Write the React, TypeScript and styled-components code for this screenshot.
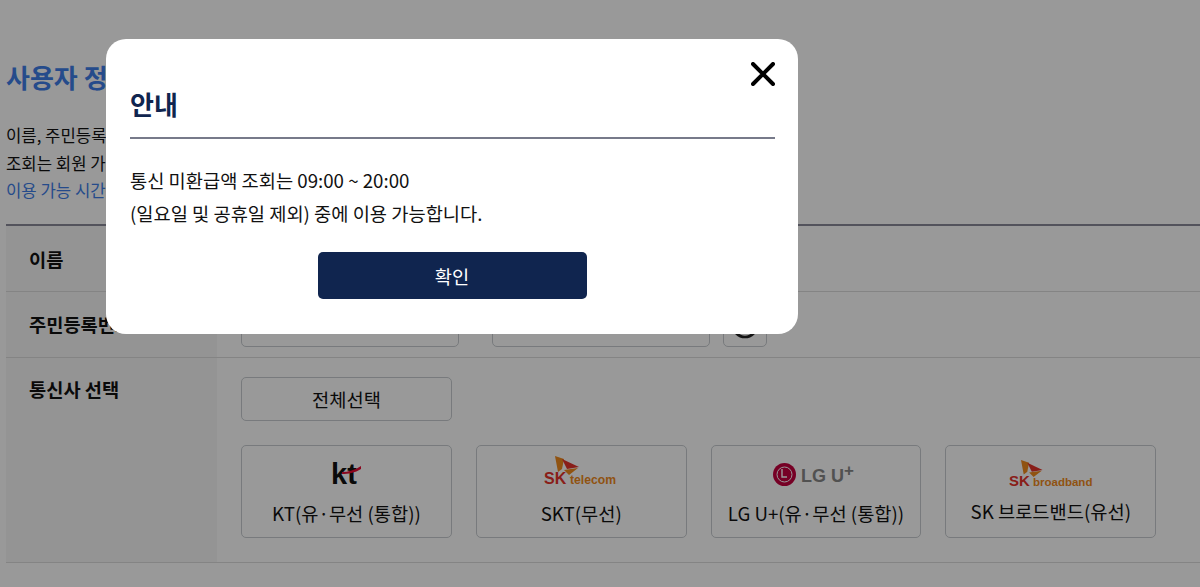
import React from "react";
import styled, { createGlobalStyle } from "styled-components";

const GlobalStyle = createGlobalStyle`
  * {
    box-sizing: border-box;
  }
  html, body {
    margin: 0;
    height: 100%;
    overflow: hidden;
    background: #fff;
    font-family: "Noto Sans CJK KR", "Noto Sans", sans-serif;
    color: #111;
  }
`;

const SkWing = ({ x, y, s }: { x: number; y: number; s: number }) => (
  <g transform={`translate(${x} ${y}) scale(${s})`}>
    <path d="M0 0 L9 3 L7 13 L3 16 Z" fill="#f08a1d" />
    <path d="M7 3 L24 11 L12 13 Z" fill="#e5332a" />
    <path d="M9 14 L23 12 L14 19 Z" fill="#f08a1d" />
  </g>
);

const KtLogo = () => (
  <svg width="32" height="38" viewBox="0 -6 32 38">
    <text x="1" y="23" fontFamily="Liberation Sans" fontWeight="700" fontSize="29" fill="#111">kt</text>
    <path d="M12 11 C18 11 25 9 31 5 L31 8 C25 12 18 13 12 13 Z" fill="#e60a32" />
  </svg>
);

const SktLogo = () => (
  <svg width="76" height="32" viewBox="0 0 76 32">
    <SkWing x={12} y={0} s={1} />
    <text x="1" y="28" fontFamily="Liberation Sans" fontWeight="700" fontSize="16" fill="#e5332a">SK</text>
    <text x="27" y="28" fontFamily="Liberation Sans" fontWeight="700" fontSize="12.2" fill="#f08a1d">telecom</text>
  </svg>
);

const LguLogo = () => (
  <svg width="86" height="32" viewBox="0 -6 86 32">
    <circle cx="11.5" cy="11.5" r="11.5" fill="#c5003e" />
    <circle cx="11.5" cy="11.5" r="7.5" fill="none" stroke="#fff" strokeWidth="1" />
    <path d="M9 6 V14 H14" fill="none" stroke="#fff" strokeWidth="1.4" />
    <text x="28" y="19" fontFamily="Liberation Sans" fontWeight="700" fontSize="18" fill="#888">LG U</text>
    <text x="71" y="13" fontFamily="Liberation Sans" fontWeight="700" fontSize="17" fill="#888">+</text>
  </svg>
);

const BroadbandLogo = () => (
  <svg width="84" height="30" viewBox="0 0 84 30">
    <SkWing x={12} y={0} s={0.9} />
    <text x="0" y="26" fontFamily="Liberation Sans" fontWeight="700" fontSize="15" fill="#e5332a">SK</text>
    <text x="24" y="26" fontFamily="Liberation Sans" fontWeight="700" fontSize="11.5" fill="#f08a1d">broadband</text>
  </svg>
);

const carriers = [
  { name: "KT(유·무선 (통합))", logo: <KtLogo />, top: 9, logoHeight: 54 },
  { name: "SKT(무선)", logo: <SktLogo />, top: 10, logoHeight: 54 },
  { name: "LG U+(유·무선 (통합))", logo: <LguLogo />, top: 11, logoHeight: 54 },
  { name: "SK 브로드밴드(유선)", logo: <BroadbandLogo />, top: 14, logoHeight: 52 },
];

export default function App() {
  return (
    <>
      <GlobalStyle />
      <Page>
        <Title>사용자 정보 입력</Title>
        <Description>
          이름, 주민등록번호를 입력하고 통신사를 선택해 주세요.
          <br />
          조회는 회원 가입 여부와 관계없이 가능합니다.
          <Notice>이용 가능 시간은 09:00 ~ 20:00 입니다.</Notice>
        </Description>
        <Table>
          <Row $height={66}>
            <Label $top={20}>이름</Label>
            <Cell />
          </Row>
          <Row $height={66}>
            <Label $top={19}>주민등록번호</Label>
            <Cell>
              <InputLine>
                <Field />
                <Field />
                <RefreshButton>
                  <svg width="28" height="28" viewBox="0 0 28 28">
                    <circle cx="14" cy="14" r="12" fill="none" stroke="#222" strokeWidth="2.6" />
                  </svg>
                </RefreshButton>
              </InputLine>
            </Cell>
          </Row>
          <Row $height={205}>
            <Label $top={18}>통신사 선택</Label>
            <Cell>
              <SelectAll>전체선택</SelectAll>
              <CarrierGrid>
                {carriers.map((c) => (
                  <Carrier key={c.name}>
                    <LogoBox $top={c.top} $height={c.logoHeight}>{c.logo}</LogoBox>
                    <CarrierName>{c.name}</CarrierName>
                  </Carrier>
                ))}
              </CarrierGrid>
            </Cell>
          </Row>
        </Table>
      </Page>
      <Overlay>
        <Modal>
          <CloseButton aria-label="닫기">
            <svg width="24" height="24" viewBox="0 0 24 24">
              <path d="M2 2 L22 22 M22 2 L2 22" stroke="#000" strokeWidth="4" strokeLinecap="round" />
            </svg>
          </CloseButton>
          <ModalTitle>안내</ModalTitle>
          <ModalBody>
            통신 미환급액 조회는 09:00 ~ 20:00
            <br />
            (일요일 및 공휴일 제외) 중에 이용 가능합니다.
          </ModalBody>
          <ConfirmRow>
            <ConfirmButton>확인</ConfirmButton>
          </ConfirmRow>
        </Modal>
      </Overlay>
    </>
  );
}

const Page = styled.div`
  height: 587px;
  padding: 59px 0 0 6px;
  overflow: hidden;
`;

const Title = styled.h2`
  margin: 0 0 27px;
  height: 36px;
  font-size: 26px;
  line-height: 36px;
  font-weight: 700;
  color: #3f7ee8;
  white-space: nowrap;
`;

const Description = styled.div`
  height: 81px;
  margin-bottom: 21px;
  font-size: 16.7px;
  line-height: 27.5px;
  white-space: nowrap;
`;

const Notice = styled.div`
  color: #3f7ee8;
`;

const Table = styled.div`
  border-top: 2px solid #8a8a9a;
`;

const Row = styled.div<{ $height: number }>`
  display: flex;
  height: ${({ $height }) => $height}px;
  border-bottom: 1px solid #ddd;
`;

const Label = styled.div<{ $top: number }>`
  width: 211px;
  flex-shrink: 0;
  padding: ${({ $top }) => $top}px 0 0 23px;
  background: #f7f7f7;
  font-size: 18.7px;
  line-height: 26px;
  font-weight: 700;
  white-space: nowrap;
`;

const Cell = styled.div`
  flex: 1;
  padding: 11px 0 0 24px;
  &:empty {
    padding: 0;
  }
`;

const InputLine = styled.div`
  display: flex;
`;

const Field = styled.div`
  width: 218px;
  height: 44px;
  margin-right: 33px;
  border: 1px solid #c8ccd0;
  border-radius: 5px;
  background: #fff;
`;

const RefreshButton = styled.div`
  display: flex;
  align-items: center;
  justify-content: center;
  width: 44px;
  height: 44px;
  margin-left: -20px;
  border: 1px solid #c8ccd0;
  border-radius: 5px;
`;

const SelectAll = styled.button`
  display: block;
  width: 211px;
  height: 44px;
  margin-top: 8px;
  padding: 0 0 2px;
  border: 1px solid #c8ccd0;
  border-radius: 5px;
  background: #fff;
  font: inherit;
  font-size: 18.7px;
  color: #111;
`;

const CarrierGrid = styled.div`
  display: flex;
  gap: 24px;
  margin-top: 24px;
`;

const Carrier = styled.div`
  width: 210.8px;
  height: 93px;
  border: 1px solid #c8ccd0;
  border-radius: 5px;
  background: #fff;
  display: flex;
  flex-direction: column;
  align-items: center;
`;

const LogoBox = styled.div<{ $top: number; $height: number }>`
  height: ${({ $height }) => $height}px;
  padding-top: ${({ $top }) => $top}px;
  line-height: 0;
`;

const CarrierName = styled.div`
  font-size: 18.7px;
  line-height: 26px;
  white-space: nowrap;
`;

const Overlay = styled.div`
  position: fixed;
  inset: 0;
  padding: 39px 0 0 106px;
  background: rgba(0, 0, 0, 0.4);
`;

const Modal = styled.div`
  position: relative;
  width: 692px;
  height: 295px;
  padding: 46px 23px 0 24px;
  background: #fff;
  border-radius: 20px;
`;

const CloseButton = styled.button`
  position: absolute;
  top: 23px;
  right: 23px;
  width: 24px;
  height: 24px;
  padding: 0;
  border: 0;
  background: none;
  line-height: 0;
`;

const ModalTitle = styled.h3`
  margin: 0;
  height: 54px;
  border-bottom: 2px solid #777a8a;
  font-size: 26px;
  line-height: 38px;
  font-weight: 700;
  color: #10254f;
`;

const ModalBody = styled.p`
  margin: 24px 0 0;
  font-size: 18.7px;
  line-height: 33px;
  color: #111;
`;

const ConfirmRow = styled.div`
  display: flex;
  justify-content: center;
  margin-top: 23px;
`;

const ConfirmButton = styled.button`
  width: 269px;
  height: 47px;
  margin-right: 1px;
  border: 0;
  border-radius: 5px;
  background: #10254f;
  color: #fff;
  font: inherit;
  font-size: 18.7px;
`;
